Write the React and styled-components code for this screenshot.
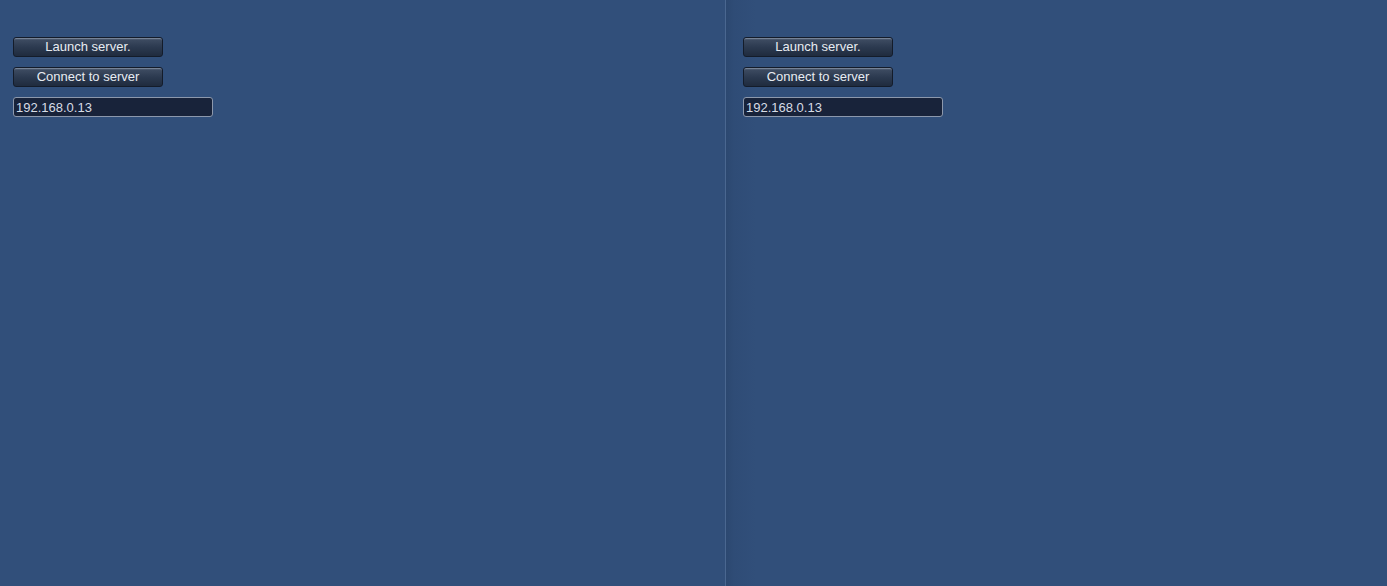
import React from 'react';
import styled, { createGlobalStyle } from 'styled-components';

const GlobalStyle = createGlobalStyle`
  html, body {
    margin: 0;
    padding: 0;
    height: 100%;
    background: #314f7a;
    overflow: hidden;
  }
  #root { height: 100%; }
`;

const Screen = styled.div`
  display: flex;
  width: 1387px;
  height: 586px;
  background: #314f7a;
`;

const Pane = styled.div`
  width: ${({ width }) => width}px;
  height: 100%;
  flex: none;
  display: flex;
  flex-direction: column;
  align-items: flex-start;
  gap: 10px;
  padding: 37px 0 0 ${({ inset }) => inset}px;
  box-sizing: border-box;
  background: ${({ shaded }) =>
    shaded
      ? 'linear-gradient(to right, #2c4870 0px, #2f4c76 8px, #314f7a 30px)'
      : '#314f7a'};
`;

const Divider = styled.div`
  width: 1px;
  flex: none;
  height: 100%;
  background: #4a6790;
`;

const Button = styled.button`
  width: 150px;
  height: 20px;
  margin: 0;
  padding: 0;
  box-sizing: border-box;
  border: 1px solid #141c2a;
  border-radius: 3px;
  background: linear-gradient(to bottom, #6b7a90 0px, #3c4a60 2px, #2c3a50 9px, #1f2b3e 100%);
  box-shadow: inset 0 1px 0 rgba(255, 255, 255, 0.15);
  color: #e8ecf2;
  font-family: 'Liberation Sans', Arial, sans-serif;
  font-size: 13px;
  line-height: 18px;
  text-align: center;
`;

const Field = styled.input`
  width: 200px;
  height: 20px;
  margin: 0;
  padding: 0 0 0 2px;
  box-sizing: border-box;
  border: 1px solid #8c98ac;
  border-radius: 3px;
  background: #18233a;
  color: #d6dce6;
  font-family: 'Liberation Sans', Arial, sans-serif;
  font-size: 13px;
  outline: none;
`;

const ClientPane = ({ width, inset, shaded }) => (
  <Pane width={width} inset={inset} shaded={shaded}>
    <Button>Launch server.</Button>
    <Button>Connect to server</Button>
    <Field defaultValue="192.168.0.13" />
  </Pane>
);

const App = () => (
  <Screen>
    <GlobalStyle />
    <ClientPane width={725} inset={13} />
    <Divider />
    <ClientPane width={661} inset={17} shaded />
  </Screen>
);

export default App;
